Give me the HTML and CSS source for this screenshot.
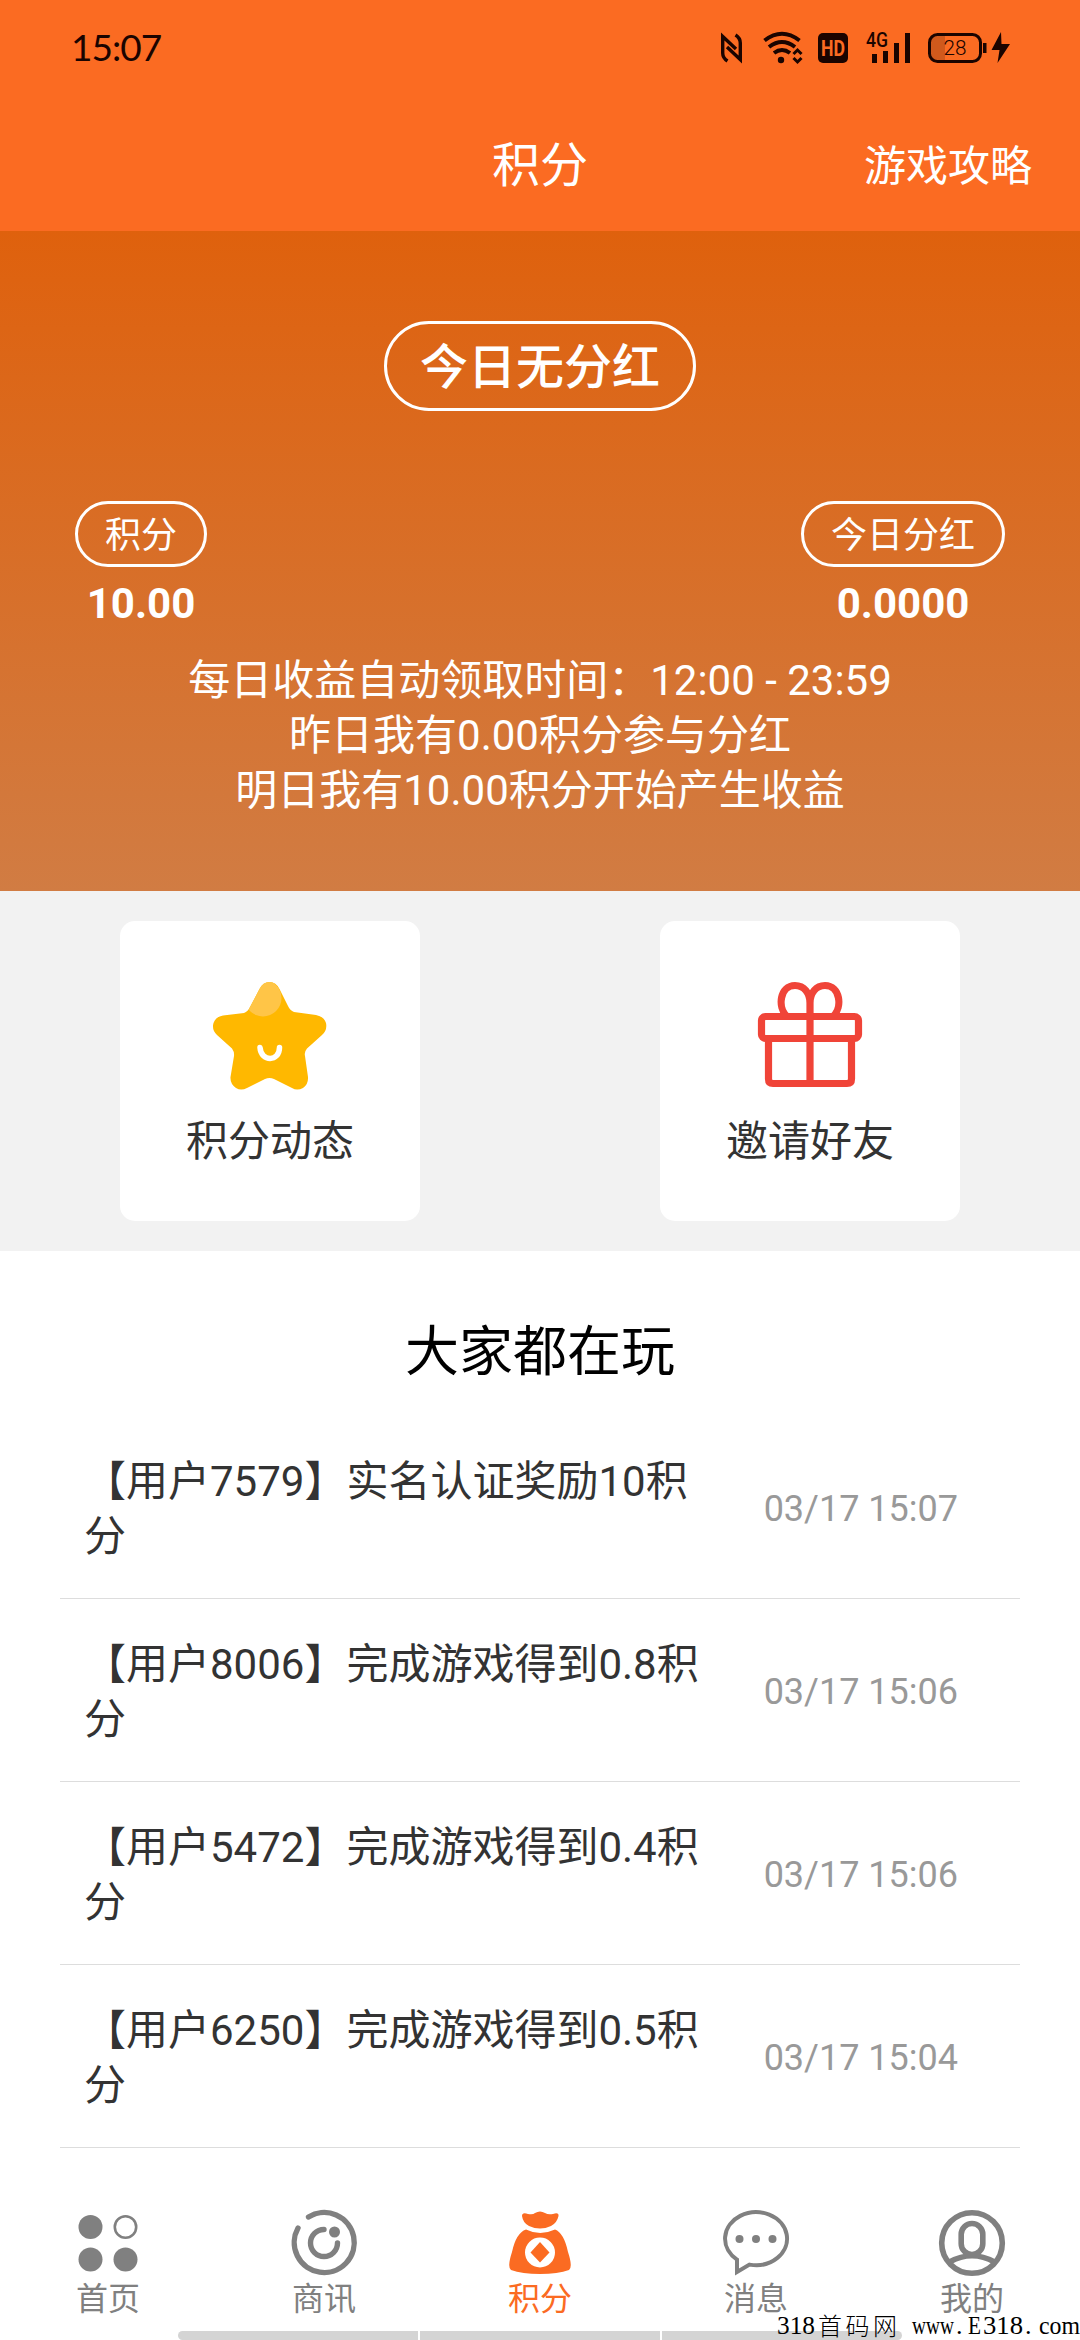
FILE: index.html
```html
<!DOCTYPE html>
<html lang="zh-CN">
<head>
<meta charset="utf-8">
<title>积分</title>
<link rel="stylesheet" href="styles.css">
</head>
<body>
<div class="app">
  <header class="top">
    <div class="status">
      <span class="clock">15:07</span>
      <svg class="status-icons" width="300" height="40" viewBox="0 0 300 40">
        <g fill="none" stroke="#1a0400">
          <path stroke-width="3.400" d="M7.500 35Q2.700 32 2.700 27V10.500L16 23M15.500 9Q20.300 12 20.300 17V33.500L7 21"/>
          <path stroke-width="4" d="M44.500 14.500Q62 1 79.500 14.500M49 21Q62 11 75 21M54 27Q62 21 70 27"/>
        </g>
        <circle cx="61" cy="34" r="3.200"/>
        <path d="M94 28l4-4 4 4M94 32l4 4 4-4" fill="none" stroke="#1a0400" stroke-width="3" transform="translate(-20.500 0)"/>
        <rect x="98" y="7" width="30" height="30" rx="5"/>
        <text class="hd" x="101" y="29.500" textLength="24" lengthAdjust="spacingAndGlyphs">HD</text>
        <text class="net" x="146" y="21" textLength="22" lengthAdjust="spacingAndGlyphs">4G</text>
        <path d="M152 28h5v9h-5zM163 25h5v12h-5zM174 17h5v20h-5zM185 7h5v30h-5z"/>
        <path d="M225 10v24h-7q-7 0-7-7V17q0-7 7-7z" fill="#000" opacity=".17"/>
        <rect x="209.500" y="8.500" width="51" height="27" rx="8" fill="none" stroke="#1a0400" stroke-width="3"/>
        <rect x="263" y="17" width="3.500" height="10"/>
        <text class="pct" x="223.500" y="29" textLength="23" lengthAdjust="spacingAndGlyphs">28</text>
        <path d="M281 6L271.500 24h8l-2 13 12.500-19h-8.500z"/>
      </svg>
    </div>
    <nav class="titlebar">
      <span></span>
      <h1 class="title">积分</h1>
      <span class="guide">游戏攻略</span>
    </nav>
  </header>

  <section class="hero">
    <div class="badge">今日无分红</div>
    <div class="stats">
      <div class="stat"><span class="pill">积分</span><b class="value">10.00</b></div>
      <div class="stat"><span class="pill">今日分红</span><b class="value">0.0000</b></div>
    </div>
    <p class="notes">每日收益自动领取时间：12:00 - 23:59<br>昨日我有0.00积分参与分红<br>明日我有10.00积分开始产生收益</p>
  </section>

  <section class="cards">
    <div class="card">
      <svg width="120" height="120" viewBox="0 0 120 120">
        <defs><clipPath id="star"><path d="M49.500 13Q53 6 59.500 6T69.500 13L78 30Q80 34.500 84 36L106 39Q114 40.500 116 47Q117.500 54 112 59L97 72.500Q94 76 95 80L98 101Q98.500 108 93 112Q87 115 82 112L64 103Q59.500 101 55 103L37 112Q31 115 26 112Q20 108 20.500 101L24 80Q24.500 76 22 72.500L7 59Q1.500 54 3.500 47Q6 40.500 13 39.500L34 37Q38 35.500 40 31Z"/></clipPath></defs>
        <g clip-path="url(#star)"><rect width="120" height="120" fill="#ffb800"/><circle cx="53" cy="22" r="18.500" fill="#ffc547"/></g>
        <path d="M50 71.500C51 86 69.500 86 69.500 71.500" fill="none" stroke="#fff" stroke-width="5.500" stroke-linecap="round"/>
      </svg>
      <span>积分动态</span>
    </div>
    <div class="card">
      <svg width="120" height="120" viewBox="0 0 120 120" fill="none" stroke="#f04438" stroke-width="7.200">
        <rect x="11.500" y="40.500" width="97" height="22" rx="4"/>
        <path d="M18.500 62.500V103q0 4.500 4.500 4.500h74q4.500 0 4.500-4.500V62.500M60 24v83M37 40.500C27 31 30 9.500 45 9.500C54 9.500 60 17 60 27C60 17 66 9.500 75 9.500C90 9.500 93 31 83 40.500"/>
      </svg>
      <span>邀请好友</span>
    </div>
  </section>

  <section class="feed">
    <h2 class="feed-title">大家都在玩</h2>
    <ul class="list">
      <li class="row"><p class="what">【用户7579】实名认证奖励10积分</p><time class="when">03/17 15:07</time></li>
      <li class="row"><p class="what">【用户8006】完成游戏得到0.8积分</p><time class="when">03/17 15:06</time></li>
      <li class="row"><p class="what">【用户5472】完成游戏得到0.4积分</p><time class="when">03/17 15:06</time></li>
      <li class="row"><p class="what">【用户6250】完成游戏得到0.5积分</p><time class="when">03/17 15:04</time></li>
    </ul>
  </section>

  <nav class="tabs">
    <a class="tab">
      <svg width="72" height="72" viewBox="0 0 72 72" fill="#808080"><circle cx="18.500" cy="21" r="12"/><circle cx="53.500" cy="21" r="10.700" fill="none" stroke="#808080" stroke-width="2.600"/><circle cx="18.500" cy="53.500" r="12"/><circle cx="53.500" cy="53.500" r="12"/></svg>
      <span>首页</span>
    </a>
    <a class="tab">
      <svg width="72" height="72" viewBox="0 0 72 72" fill="none" stroke="#808080" stroke-width="5.400" stroke-linecap="round"><path d="M20.500 11A30 30 0 1 1 10 22M36 23.500A13.500 13.500 0 1 0 49.500 37"/><circle cx="46.500" cy="26" r="5.500" fill="#808080" stroke="none"/></svg>
      <span>商讯</span>
    </a>
    <a class="tab active">
      <svg width="72" height="72" viewBox="0 0 72 72" fill="#fb6b22"><path d="M18 10Q18 6 24 8Q29 9 31 7Q36 4 41 7Q44 9 49 8Q55 6 54.500 10Q53 17 47 20Q36 25 25 20Q19 17 18 10Z"/><path d="M22 23.500Q36 30.500 51 23.500Q60 27 64 46Q69 61 65 64Q54 68 36 68T7 64Q3 61 8 46Q12 27 22 23.500Z"/><circle cx="36" cy="46.500" r="15" fill="#fff"/><path d="M36 36L45.500 46.500L36 56.500L26.500 46.500Z"/></svg>
      <span>积分</span>
    </a>
    <a class="tab">
      <svg width="72" height="72" viewBox="0 0 72 72" fill="#808080"><path d="M17 53.600V66L29.500 58.600A31 26.500 0 1 0 17 53.600Z" fill="none" stroke="#808080" stroke-width="4"/><circle cx="19.500" cy="33" r="4"/><circle cx="36" cy="33" r="4"/><circle cx="52.500" cy="33" r="4"/></svg>
      <span>消息</span>
    </a>
    <a class="tab">
      <svg width="72" height="72" viewBox="0 0 72 72" fill="none" stroke="#808080" stroke-width="5.600"><circle cx="36" cy="37" r="30.300"/><rect x="25.200" y="17.500" width="21.600" height="31" rx="10.800"/><path d="M13.500 56Q36 43.500 58.500 56"/></svg>
      <span>我的</span>
    </a>
  </nav>
  <div class="homebar"><i></i><i></i><i></i></div>
  <svg class="watermark" width="304" height="28" viewBox="0 0 304 28">
    <text x="1" y="22" textLength="38" lengthAdjust="spacingAndGlyphs">318</text>
    <text class="cjk" x="42" y="23" textLength="79">首码网</text>
    <text x="136" y="22" textLength="42" lengthAdjust="spacingAndGlyphs">www</text>
    <text x="180" y="22">.</text>
    <text x="192" y="22" textLength="13" lengthAdjust="spacingAndGlyphs">E</text>
    <text x="207" y="22" textLength="40" lengthAdjust="spacingAndGlyphs">318</text>
    <text x="249" y="22">.</text>
    <text x="263" y="22" textLength="41" lengthAdjust="spacingAndGlyphs">com</text>
  </svg>
</div>
</body>
</html>
```

FILE: styles.css
```css
* { box-sizing: border-box; margin: 0; padding: 0; }
body {
  width: 1080px;
  height: 2340px;
  overflow: hidden;
  font-family: Roboto, "Noto Sans CJK SC", sans-serif;
  font-size: 42px;
  color: #333;
  background: #fff;
}
.app {
  position: relative;
  display: flex;
  flex-direction: column;
  height: 2340px;
}

.top { height: 231px; background: #fb6b22; }
.status {
  display: flex;
  justify-content: space-between;
  align-items: center;
  height: 96px;
  padding: 0 60px 0 71px;
}
.clock { margin-bottom: 3px; font-family: Lato, sans-serif; font-size: 37px; letter-spacing: -1px; color: #1a0400; }
.status-icons { fill: #1a0400; margin-bottom: 4px; }
.hd { font: 700 22px Roboto, sans-serif; fill: #fb6b22; }
.net { font: 500 20px Roboto, sans-serif; }
.pct { font: 300 21px Roboto, sans-serif; }
.titlebar {
  display: grid;
  grid-template-columns: 1fr auto 1fr;
  align-items: center;
  height: 135px;
  padding: 0 48px;
  color: #fff;
}
.title { padding-top: 5px; font-size: 48px; font-weight: 400; line-height: 72px; }
.guide { justify-self: end; padding-bottom: 3px; }

.hero {
  display: flex;
  flex-direction: column;
  align-items: center;
  height: 660px;
  padding: 90px 75px 0;
  color: #fff;
  background: linear-gradient(#df610d, #d17c43);
}
.badge {
  width: 312px;
  height: 90px;
  border: 3px solid #fff;
  border-radius: 45px;
  font-size: 48px;
  font-weight: 500;
  line-height: 87px;
  text-align: center;
}
.stats {
  display: flex;
  justify-content: space-between;
  align-self: stretch;
  margin-top: 90px;
}
.stat { display: flex; flex-direction: column; align-items: center; }
.pill {
  height: 66px;
  padding: 0 27px;
  border: 3px solid #fff;
  border-radius: 33px;
  font-size: 36px;
  line-height: 64px;
}
.value { margin-top: 9px; font-size: 42px; font-weight: 700; line-height: 55px; }
.notes { margin-top: 22px; line-height: 55px; text-align: center; white-space: nowrap; }

.cards {
  display: flex;
  justify-content: space-between;
  height: 360px;
  padding: 30px 120px;
  background: #f2f2f2;
}
.card {
  display: flex;
  flex-direction: column;
  align-items: center;
  width: 300px;
  height: 300px;
  padding-top: 55px;
  border-radius: 15px;
  background: #fff;
}
.card span { margin-top: 18px; line-height: 56px; }

.feed { flex: 1; padding: 60px 60px 0; }
.feed-title {
  height: 105px;
  font-size: 54px;
  font-weight: 400;
  line-height: 84px;
  text-align: center;
  color: #000;
}
.list { list-style: none; }
.row {
  display: flex;
  align-items: center;
  justify-content: space-between;
  height: 183px;
  padding: 4px 62px 0 24px;
  border-bottom: 1px solid #ddd;
}
.what { width: 630px; line-height: 55px; }
.when { font-size: 36px; color: #999; }

.tabs { display: flex; height: 141px; background: #fff; }
.tab {
  display: flex;
  flex: 1;
  flex-direction: column;
  align-items: center;
  padding-top: 7px;
  color: #808080;
  font-size: 32px;
}
.tab span { line-height: 40px; margin-top: 1px; }
.active { color: #fb6b22; }

/* Gesture bar and site mark lie over the tab bar. */
.homebar {
  position: absolute;
  left: 178px;
  bottom: 0;
  display: flex;
  gap: 2px;
  width: 724px;
  height: 9px;
  border-radius: 5px;
  overflow: hidden;
}
.homebar i { flex: 1; background: #d4d4d4; }
.watermark {
  position: absolute;
  right: 0;
  bottom: 0;
  font-family: "Liberation Serif", serif;
  font-size: 26px;
  fill: #000;
}
.cjk { font-family: "Noto Sans CJK SC", sans-serif; font-size: 24px; font-weight: 300; }
```
